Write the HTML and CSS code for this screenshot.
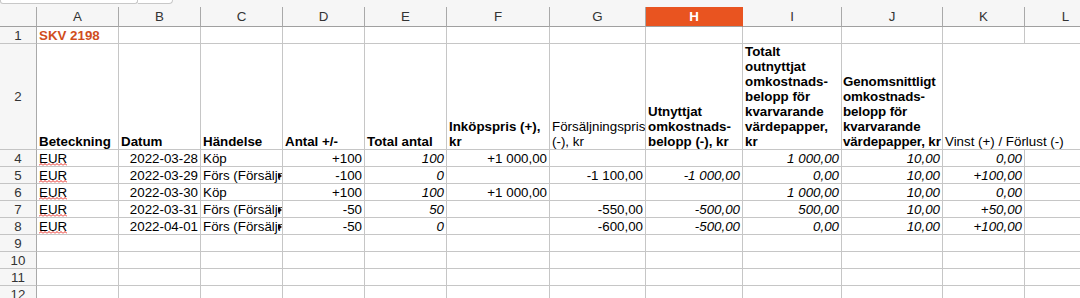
FILE: index.html
```html
<!DOCTYPE html>
<html lang="sv">
<head>
<meta charset="utf-8">
<title>SKV 2198</title>
<link rel="stylesheet" href="styles.css">
</head>
<body>
<div class="topbar"><div class="namebox"></div><div class="fxbox"></div></div>
<div class="sheet">
  <div class="row colhdr">
    <div class="corner"></div>
    <div class="ch">A</div><div class="ch">B</div><div class="ch">C</div><div class="ch">D</div>
    <div class="ch">E</div><div class="ch">F</div><div class="ch">G</div><div class="ch sel">H</div>
    <div class="ch">I</div><div class="ch">J</div><div class="ch">K</div><div class="ch">L</div>
  </div>
  <div class="row r1">
    <div class="rh">1</div>
    <div class="c title">SKV 2198</div><div class="c"></div><div class="c"></div><div class="c"></div>
    <div class="c"></div><div class="c"></div><div class="c"></div><div class="c"></div>
    <div class="c"></div><div class="c"></div><div class="c"></div><div class="c"></div>
  </div>
  <div class="row r2">
    <div class="rh">2</div>
    <div class="c b">Beteckning</div>
    <div class="c b">Datum</div>
    <div class="c b">Händelse</div>
    <div class="c b">Antal +/-</div>
    <div class="c b">Total antal</div>
    <div class="c b">Inköpspris (+),<br>kr</div>
    <div class="c">Försäljningspris<br>(-), kr</div>
    <div class="c b">Utnyttjat<br>omkostnads-<br>belopp (-), kr</div>
    <div class="c b">Totalt<br>outnyttjat<br>omkostnads-<br>belopp för<br>kvarvarande<br>värdepapper,<br>kr</div>
    <div class="c b tight">Genomsnittligt<br>omkostnads-<br>belopp för<br>kvarvarande<br>värdepapper, kr</div>
    <div class="c spill">Vinst (+) / Förlust (-)</div>
    <div class="c"></div>
  </div>
  <div class="row">
    <div class="rh">4</div>
    <div class="c"><span class="spell">EUR</span></div>
    <div class="c n">2022-03-28</div>
    <div class="c">Köp</div>
    <div class="c n">+100</div>
    <div class="c n i">100</div>
    <div class="c n">+1&nbsp;000,00</div>
    <div class="c"></div>
    <div class="c"></div>
    <div class="c n i">1&nbsp;000,00</div>
    <div class="c n i">10,00</div>
    <div class="c n i">0,00</div>
    <div class="c"></div>
  </div>
  <div class="row">
    <div class="rh">5</div>
    <div class="c"><span class="spell">EUR</span></div>
    <div class="c n">2022-03-29</div>
    <div class="c clip">Förs (Försäljning)<span class="more"></span></div>
    <div class="c n">-100</div>
    <div class="c n i">0</div>
    <div class="c"></div>
    <div class="c n">-1&nbsp;100,00</div>
    <div class="c n i">-1&nbsp;000,00</div>
    <div class="c n i">0,00</div>
    <div class="c n i">10,00</div>
    <div class="c n i">+100,00</div>
    <div class="c"></div>
  </div>
  <div class="row">
    <div class="rh">6</div>
    <div class="c"><span class="spell">EUR</span></div>
    <div class="c n">2022-03-30</div>
    <div class="c">Köp</div>
    <div class="c n">+100</div>
    <div class="c n i">100</div>
    <div class="c n">+1&nbsp;000,00</div>
    <div class="c"></div>
    <div class="c"></div>
    <div class="c n i">1&nbsp;000,00</div>
    <div class="c n i">10,00</div>
    <div class="c n i">0,00</div>
    <div class="c"></div>
  </div>
  <div class="row">
    <div class="rh">7</div>
    <div class="c"><span class="spell">EUR</span></div>
    <div class="c n">2022-03-31</div>
    <div class="c clip">Förs (Försäljning)<span class="more"></span></div>
    <div class="c n">-50</div>
    <div class="c n i">50</div>
    <div class="c"></div>
    <div class="c n">-550,00</div>
    <div class="c n i">-500,00</div>
    <div class="c n i">500,00</div>
    <div class="c n i">10,00</div>
    <div class="c n i">+50,00</div>
    <div class="c"></div>
  </div>
  <div class="row">
    <div class="rh">8</div>
    <div class="c"><span class="spell">EUR</span></div>
    <div class="c n">2022-04-01</div>
    <div class="c clip">Förs (Försäljning)<span class="more"></span></div>
    <div class="c n">-50</div>
    <div class="c n i">0</div>
    <div class="c"></div>
    <div class="c n">-600,00</div>
    <div class="c n i">-500,00</div>
    <div class="c n i">0,00</div>
    <div class="c n i">10,00</div>
    <div class="c n i">+100,00</div>
    <div class="c"></div>
  </div>
  <div class="row"><div class="rh">9</div><div class="c"></div><div class="c"></div><div class="c"></div><div class="c"></div><div class="c"></div><div class="c"></div><div class="c"></div><div class="c"></div><div class="c"></div><div class="c"></div><div class="c"></div><div class="c"></div></div>
  <div class="row"><div class="rh">10</div><div class="c"></div><div class="c"></div><div class="c"></div><div class="c"></div><div class="c"></div><div class="c"></div><div class="c"></div><div class="c"></div><div class="c"></div><div class="c"></div><div class="c"></div><div class="c"></div></div>
  <div class="row"><div class="rh">11</div><div class="c"></div><div class="c"></div><div class="c"></div><div class="c"></div><div class="c"></div><div class="c"></div><div class="c"></div><div class="c"></div><div class="c"></div><div class="c"></div><div class="c"></div><div class="c"></div></div>
  <div class="row"><div class="rh">12</div><div class="c"></div><div class="c"></div><div class="c"></div><div class="c"></div><div class="c"></div><div class="c"></div><div class="c"></div><div class="c"></div><div class="c"></div><div class="c"></div><div class="c"></div><div class="c"></div></div>
</div>
</body>
</html>
```

FILE: styles.css
```css
* { box-sizing: border-box; }
html, body {
  margin: 0;
  padding: 0;
  background: #ffffff;
  overflow: hidden;
  width: 1080px;
  height: 298px;
}
body {
  font-family: "Liberation Sans", Arial, sans-serif;
  font-size: 13.33px;
  color: #000;
}
.topbar {
  height: 7px;
  background: #f6f6f6;
  display: flex;
  align-items: flex-start;
}
.namebox {
  width: 138px;
  height: 4px;
  background: #fff;
  border: 1px solid #c8c8c8;
  border-top: none;
  border-radius: 0 0 3px 3px;
}
.fxbox {
  width: 35px;
  height: 4px;
  background: #fff;
  border: 1px solid #c8c8c8;
  border-top: none;
  border-left: none;
  border-radius: 0 0 4px 0;
}
.sheet {
  width: 1107px;
}
.row {
  display: grid;
  grid-template-columns: 37px 82px 82px 82px 82px 82px 103px 96px 97px 99px 101px 82px 82px;
  height: 17px;
}
.colhdr { height: 20px; }
.r2 { height: 106px; }
.corner, .ch {
  background: #f6f6f6;
  border-right: 1px solid #a9a9a9;
  border-bottom: 1px solid #a0a0a0;
  line-height: 19px;
  text-align: center;
  color: #333;
}
.ch.sel {
  background: #e95420;
  color: #fff;
  font-weight: bold;
  border-right-color: #e95420;
}
.rh {
  background: #f6f6f6;
  border-right: 1px solid #a9a9a9;
  border-bottom: 1px solid #c4c4c4;
  display: flex;
  align-items: center;
  justify-content: center;
  color: #333;
  line-height: 15px;
}
.c {
  border-right: 1px solid #c6c6c6;
  border-bottom: 1px solid #c6c6c6;
  padding: 0 2px;
  display: flex;
  flex-direction: column;
  justify-content: flex-end;
  line-height: 15px;
  white-space: nowrap;
  overflow: hidden;
  position: relative;
}
.c.n { align-items: flex-end; }
.c.i { font-style: italic; }
.c.b { font-weight: bold; }
.c.tight {
  padding-left: 1px;
  padding-right: 0;
  overflow: visible;
  letter-spacing: -0.1px;
}
.title {
  color: #d04d1c;
  font-weight: bold;
}
.spill {
  overflow: visible;
  border-right: none;
}
.spell {
  position: relative;
  align-self: flex-start;
}
.spell::after {
  content: "";
  position: absolute;
  left: 0;
  right: 0;
  bottom: 0;
  height: 3px;
  background-image: url("data:image/svg+xml,%3Csvg xmlns='http://www.w3.org/2000/svg' width='4' height='3'%3E%3Cpath d='M0 2.5 L2 0.5 L4 2.5' fill='none' stroke='%23e8231b' stroke-width='1'/%3E%3C/svg%3E");
  background-repeat: repeat-x;
}
.clip {
  padding-right: 4px;
  display: block;
  padding-top: 1px;
}
.more {
  position: absolute;
  right: 0;
  top: 6px;
  width: 0;
  height: 0;
  border-top: 3px solid transparent;
  border-bottom: 3px solid transparent;
  border-left: 4px solid #1a0000;
}
```
